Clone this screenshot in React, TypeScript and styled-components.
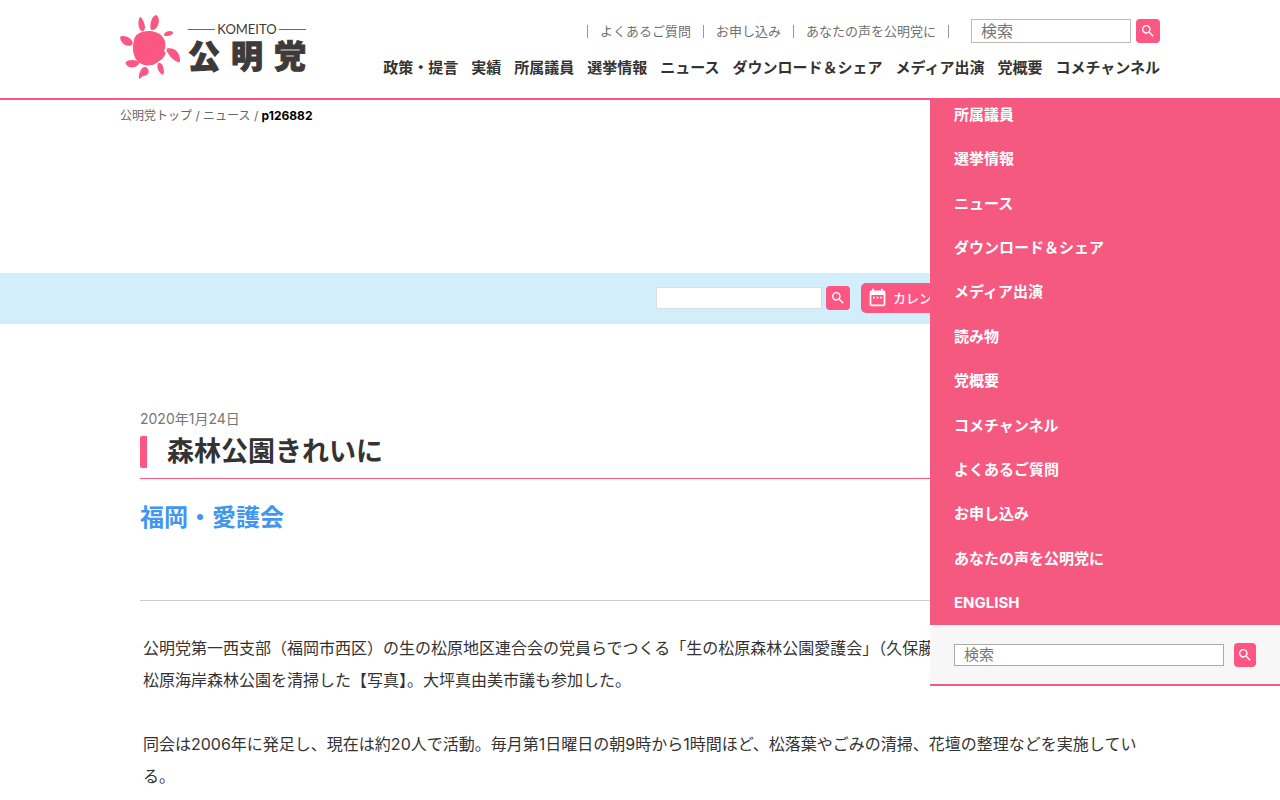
import React from "react";
import styled, { createGlobalStyle } from "styled-components";
import { MdDateRange, MdSearch } from "react-icons/md";

const pink = "#fc5682";

const GlobalStyle = createGlobalStyle`
  * { box-sizing: border-box; }
  body {
    margin: 0;
    background: #fff;
    color: #333;
    font-family: Inter, "Noto Sans CJK JP", sans-serif;
    font-size: 16px;
    overflow-x: hidden;
  }
  a { color: inherit; text-decoration: none; }
  h1, h2, p, ul, ol { margin: 0; padding: 0; }
  ul, ol { list-style: none; }
  input, button { font-family: inherit; }
`;

const Header = styled.header`
  border-bottom: 2px solid ${pink};
`;

const HeaderInner = styled.div`
  display: flex;
  justify-content: space-between;
  align-items: flex-start;
  max-width: 1040px;
  min-height: 98px;
  margin: 0 auto;
`;

const Logo = styled.a`
  display: flex;
  gap: 7px;
  margin-top: 14px;
  color: #3e3a39;
`;

const Wordmark = styled.span`
  display: flex;
  flex-direction: column;
  gap: 2px;
  width: 118px;
  padding-top: 9px;
`;

const Romaji = styled.span`
  display: flex;
  align-items: center;
  gap: 2px;
  font: 13px/13px Lato, sans-serif;
  &::before,
  &::after {
    content: "";
    flex: 1;
    height: 1px;
    background: #6b6867;
  }
`;

const Kanji = styled.span`
  display: flex;
  justify-content: space-between;
  font-size: 32px;
  line-height: 38px;
  font-weight: 900;
  -webkit-text-stroke: 1px #3e3a39;
`;

const HeaderNav = styled.div`
  display: flex;
  flex-direction: column;
  align-items: flex-end;
  gap: 13px;
  padding-top: 19px;
`;

const TopRow = styled.div`
  display: flex;
  align-items: center;
`;

const UtilityList = styled.ul`
  display: flex;
  margin-right: 22px;
  border-left: 1px solid #999;
  font-size: 13px;
  line-height: 13px;
  color: #707070;
`;

const UtilityItem = styled.li`
  padding: 0 12px;
  border-right: 1px solid #999;
`;

const MainMenu = styled.ul`
  display: flex;
  gap: 13px;
  font-size: 15px;
  line-height: 24px;
  font-weight: 700;
  white-space: nowrap;
`;

const SearchForm = styled.form<{ $gap: number }>`
  display: flex;
  align-items: center;
  gap: ${(p) => p.$gap}px;
`;

const SearchInput = styled.input<{ $width?: number; $height: number; $size: number; $border: string }>`
  ${(p) => (p.$width ? `width: ${p.$width}px;` : "flex: 1; min-width: 0;")}
  height: ${(p) => p.$height}px;
  padding: 0 9px 1px;
  border: 1px solid ${(p) => p.$border};
  border-radius: 0;
  background: #fff;
  font-size: ${(p) => p.$size}px;
  &::placeholder { color: #757575; }
`;

const SearchButton = styled.button<{ $width?: number }>`
  display: flex;
  align-items: center;
  justify-content: center;
  width: ${(p) => p.$width ?? 24}px;
  height: 24px;
  padding: 0;
  border: 0;
  border-radius: 4px;
  background: ${pink};
  color: #fff;
  font-size: 16px;
`;

const Breadcrumb = styled.nav`
  max-width: 1040px;
  min-height: 173px;
  margin: 0 auto;
  padding-top: 6px;
  font-size: 12px;
  line-height: 20px;
  color: #666;
  b { color: #000; }
`;

const FilterBar = styled.div`
  background: #d3eefb;
`;

const FilterInner = styled.div`
  display: flex;
  align-items: center;
  justify-content: flex-end;
  gap: 11px;
  max-width: 1040px;
  height: 51px;
  margin: 0 auto;
  padding: 0 190px 1px 0;
`;

const CalendarButton = styled.button`
  display: flex;
  align-items: center;
  gap: 5px;
  width: 109px;
  height: 30px;
  padding: 0 6px 2px;
  border: 0;
  border-radius: 5px;
  background: ${pink};
  color: #fff;
  font-size: 13px;
  font-weight: 500;
  white-space: nowrap;
  svg { flex: none; font-size: 21px; }
`;

const Article = styled.main`
  max-width: 1000px;
  margin: 0 auto;
  padding-top: 84px;
`;

const DateLine = styled.time`
  display: block;
  font-size: 14px;
  line-height: 22px;
  color: #777;
`;

const TitleRow = styled.div`
  padding: 6px 0 10px;
  border-bottom: 1px solid ${pink};
`;

const Title = styled.h1`
  padding-left: 20px;
  border-left: 7px solid ${pink};
  border-radius: 2px;
  font-size: 27px;
  line-height: 32px;
  font-weight: 700;
`;

const Subtitle = styled.h2`
  min-height: 122px;
  padding-top: 21px;
  border-bottom: 1px solid #ccc;
  color: #4396f0;
  font-size: 24px;
  line-height: 36px;
  font-weight: 700;
`;

const Body = styled.div`
  display: flex;
  flex-direction: column;
  gap: 32px;
  padding: 31px 3px;
  line-height: 32px;
`;

const Drawer = styled.aside`
  position: absolute;
  top: 98px;
  right: 0;
  width: 350px;
  border-bottom: 2px solid #f65980;
  background: #f7f7f7;
`;

const DrawerList = styled.ul`
  display: flex;
  flex-direction: column;
  justify-content: space-between;
  height: 527px;
  padding: 2px 24px 7px;
  background: #f65980;
  color: #fff;
  font-size: 15px;
  line-height: 30px;
  font-weight: 700;
`;

const DrawerFoot = styled.div`
  padding: 18px 24px 17px;
`;

const Sun = () => (
  <svg width="61" height="66" viewBox="29 42 183 198" fill="#fc5682" aria-hidden="true">
    <path d="M84 101C98 92 121 90 136 97C148 99 156 108 161 117C167 126 164 136 165 145L161 152L166 158C163 171 156 177 148 182C139 190 130 196 117 196C104 197 89 192 80 182C74 176 72 165 69 158C66 144 69 131 71 119C73 110 78 103 84 101Z" />
    <path d="M89 50C96 54 103 67 104 82C104 90 99 96 95 94C85 89 80 68 89 50Z" />
    <path d="M136 45C147 47 148 65 142 77C137 88 128 92 122 89C117 80 122 50 136 45Z" />
    <path d="M162 101C166 94 180 90 188 96C189 104 177 109 165 108C161 107 160 104 162 101Z" />
    <path d="M169 146C180 143 194 146 201 156C208 166 211 177 208 187C199 187 183 175 176 164C171 157 167 151 169 146Z" />
    <path d="M143 190C151 186 159 194 160 208C161 216 162 222 158 224C146 221 137 201 143 190Z" />
    <path d="M101 201C108 199 116 206 115 217C112 227 102 227 95 230L87 237C83 231 88 207 101 201Z" />
    <path d="M46 187C53 177 77 178 86 186C89 192 80 201 68 202C57 204 45 196 46 187Z" />
    <path d="M31 109C44 104 64 114 67 127C69 138 53 140 43 134C33 128 27 115 31 109Z" />
  </svg>
);

const utilityLinks = ["よくあるご質問", "お申し込み", "あなたの声を公明党に"];

const menu = [
  "政策・提言", "実績", "所属議員", "選挙情報", "ニュース",
  "ダウンロード＆シェア", "メディア出演", "党概要", "コメチャンネル",
];

const drawerMenu = [
  "所属議員", "選挙情報", "ニュース", "ダウンロード＆シェア", "メディア出演", "読み物",
  "党概要", "コメチャンネル", "よくあるご質問", "お申し込み", "あなたの声を公明党に", "ENGLISH",
];

export default function App() {
  return (
    <>
      <GlobalStyle />
      <Header>
        <HeaderInner>
          <Logo href="#">
            <Sun />
            <Wordmark>
              <Romaji>KOMEITO</Romaji>
              <Kanji><span>公</span><span>明</span><span>党</span></Kanji>
            </Wordmark>
          </Logo>
          <HeaderNav>
            <TopRow>
              <UtilityList>
                {utilityLinks.map((t) => (
                  <UtilityItem key={t}><a href="#">{t}</a></UtilityItem>
                ))}
              </UtilityList>
              <SearchForm $gap={5}>
                <SearchInput aria-label="検索" placeholder="検索" $width={160} $height={24} $size={16} $border="#bbb" />
                <SearchButton type="button" aria-label="検索"><MdSearch /></SearchButton>
              </SearchForm>
            </TopRow>
            <MainMenu>
              {menu.map((t) => (
                <li key={t}><a href="#">{t}</a></li>
              ))}
            </MainMenu>
          </HeaderNav>
        </HeaderInner>
      </Header>

      <Breadcrumb>
        <a href="#">公明党トップ</a> / <a href="#">ニュース</a> / <b>p126882</b>
      </Breadcrumb>

      <FilterBar>
        <FilterInner>
          <SearchForm $gap={4}>
            <SearchInput aria-label="ニュース検索" $width={166} $height={22} $size={13} $border="#ddd" />
            <SearchButton type="button" aria-label="ニュース検索"><MdSearch /></SearchButton>
          </SearchForm>
          <CalendarButton type="button"><MdDateRange />カレンダー</CalendarButton>
        </FilterInner>
      </FilterBar>

      <Article>
        <DateLine dateTime="2020-01-24">2020年1月24日</DateLine>
        <TitleRow>
          <Title>森林公園きれいに</Title>
        </TitleRow>
        <Subtitle>福岡・愛護会</Subtitle>
        <Body>
          <p>
            公明党第一西支部（福岡市西区）の生の松原地区連合会の党員らでつくる「生の松原森林公園愛護会」（久保藤
            <br />
            松原海岸森林公園を清掃した【写真】。大坪真由美市議も参加した。
          </p>
          <p>
            同会は2006年に発足し、現在は約20人で活動。毎月第1日曜日の朝9時から1時間ほど、松落葉やごみの清掃、花壇の整理などを実施している。
          </p>
        </Body>
      </Article>

      <Drawer>
        <DrawerList>
          {drawerMenu.map((t) => (
            <li key={t}><a href="#">{t}</a></li>
          ))}
        </DrawerList>
        <DrawerFoot>
          <SearchForm $gap={10}>
            <SearchInput aria-label="サイト内検索" placeholder="検索" $height={22} $size={15} $border="#aaa" />
            <SearchButton type="button" aria-label="サイト内検索" $width={22}><MdSearch /></SearchButton>
          </SearchForm>
        </DrawerFoot>
      </Drawer>
    </>
  );
}
